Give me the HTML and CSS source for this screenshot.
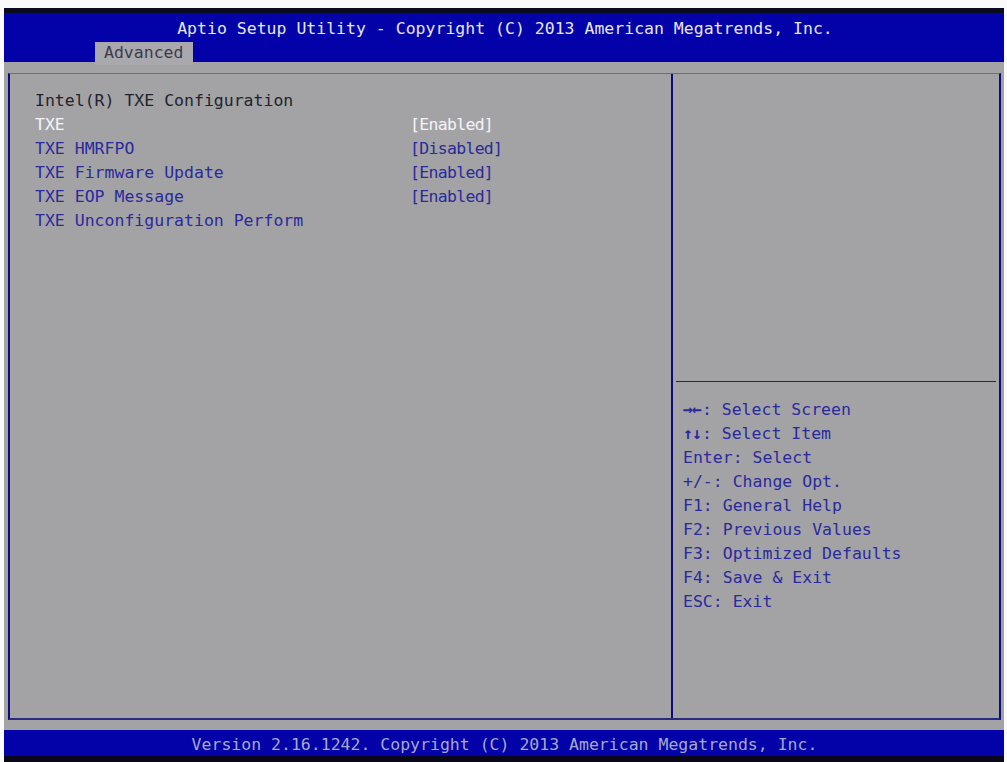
FILE: index.html
```html
<!DOCTYPE html>
<html lang="en">
<head>
    <meta charset="UTF-8">
    <meta name="viewport" content="width=device-width, initial-scale=1.0">
    <title>Aptio Setup Utility</title>
    <link rel="stylesheet" href="styles.css">
</head>
<body>
    <div class="screen">
        <div class="topline"></div>
        <div class="header">
            <div class="title">Aptio Setup Utility - Copyright (C) 2013 American Megatrends, Inc.</div>
            <div class="tabs">
                <span class="tab active">Advanced</span>
            </div>
        </div>

        <div class="main">
            <div class="box">
                <div class="settings">
                    <div class="row heading">Intel(R) TXE Configuration</div>
                    <div class="row selected"><span class="label">TXE</span><span class="value">[Enabled]</span></div>
                    <div class="row"><span class="label">TXE HMRFPO</span><span class="value">[Disabled]</span></div>
                    <div class="row"><span class="label">TXE Firmware Update</span><span class="value">[Enabled]</span></div>
                    <div class="row"><span class="label">TXE EOP Message</span><span class="value">[Enabled]</span></div>
                    <div class="row"><span class="label">TXE Unconfiguration Perform</span></div>
                </div>

                <div class="side">
                    <div class="help-text"></div>
                    <div class="keys">
                        <div class="key"><span class="arrows">→←</span>: Select Screen</div>
                        <div class="key"><span class="arrows">↑↓</span>: Select Item</div>
                        <div class="key">Enter: Select</div>
                        <div class="key">+/-: Change Opt.</div>
                        <div class="key">F1: General Help</div>
                        <div class="key">F2: Previous Values</div>
                        <div class="key">F3: Optimized Defaults</div>
                        <div class="key">F4: Save &amp; Exit</div>
                        <div class="key">ESC: Exit</div>
                    </div>
                </div>
            </div>
        </div>

        <div class="footer">Version 2.16.1242. Copyright (C) 2013 American Megatrends, Inc.</div>
        <div class="bottomline"></div>
    </div>
</body>
</html>
```

FILE: styles.css
```css
body {
    margin: 0;
    padding: 0;
    background-color: #fafafa;
    font-family: "DejaVu Sans Mono", "Liberation Mono", monospace;
    font-size: 16.5px;
}
.screen {
    width: 1000px;
    margin-left: 4px;
    padding-top: 8px;
}
.topline {
    height: 5px;
    background-color: #0a0a20;
}
.header {
    height: 49px;
    background-color: #0202a8;
    display: flex;
    flex-direction: column;
}
.title {
    height: 26px;
    line-height: 26px;
    padding-top: 3px;
    text-align: center;
    color: #e6e6f0;
    padding-left: 2px;
}
.tabs {
    padding-left: 91px;
    display: flex;
    align-items: flex-end;
    flex: 1;
}
.tab {
    height: 23px;
    line-height: 21px;
    padding: 0 10px 0 9px;
    color: #3c3c48;
}
.tab.active {
    background-color: #a9a9ad;
}
.main {
    background-color: #a3a3a6;
    padding: 11px 3px 10px 4px;
}
.box {
    height: 644px;
    display: flex;
    border-top: 1px solid #6e6e7a;
    border-left: 2px solid #0c0c78;
    border-right: 2px solid #0c0c78;
    border-bottom: 2px solid #2a2a80;
}
.settings {
    width: 663px;
    border-right: 2px solid #0c0c78;
    padding: 15px 0 0 25px;
    box-sizing: border-box;
}
.row {
    display: flex;
    height: 24px;
    line-height: 24px;
    color: #2a2a9c;
}
.row.heading {
    color: #22222c;
}
.row.selected {
    color: #f4f4f8;
}
.label {
    width: 375px;
}
.value {
    letter-spacing: -0.7px;
}
.side {
    flex: 1;
    display: flex;
    flex-direction: column;
}
.help-text {
    height: 307px;
    margin: 0 3px 0 3px;
    border-bottom: 1px solid #22226e;
}
.keys {
    padding: 16px 0 0 10px;
}
.key {
    height: 24px;
    line-height: 24px;
    color: #2a2a9c;
}
.arrows {
    font-weight: bold;
    letter-spacing: -1px;
    margin-right: 1px;
}
.footer {
    height: 26px;
    line-height: 29px;
    background-color: #0202a8;
    color: #a8a8cc;
    text-align: center;
    padding-left: 1px;
}
.bottomline {
    height: 6px;
    background-color: #08081a;
}
```
